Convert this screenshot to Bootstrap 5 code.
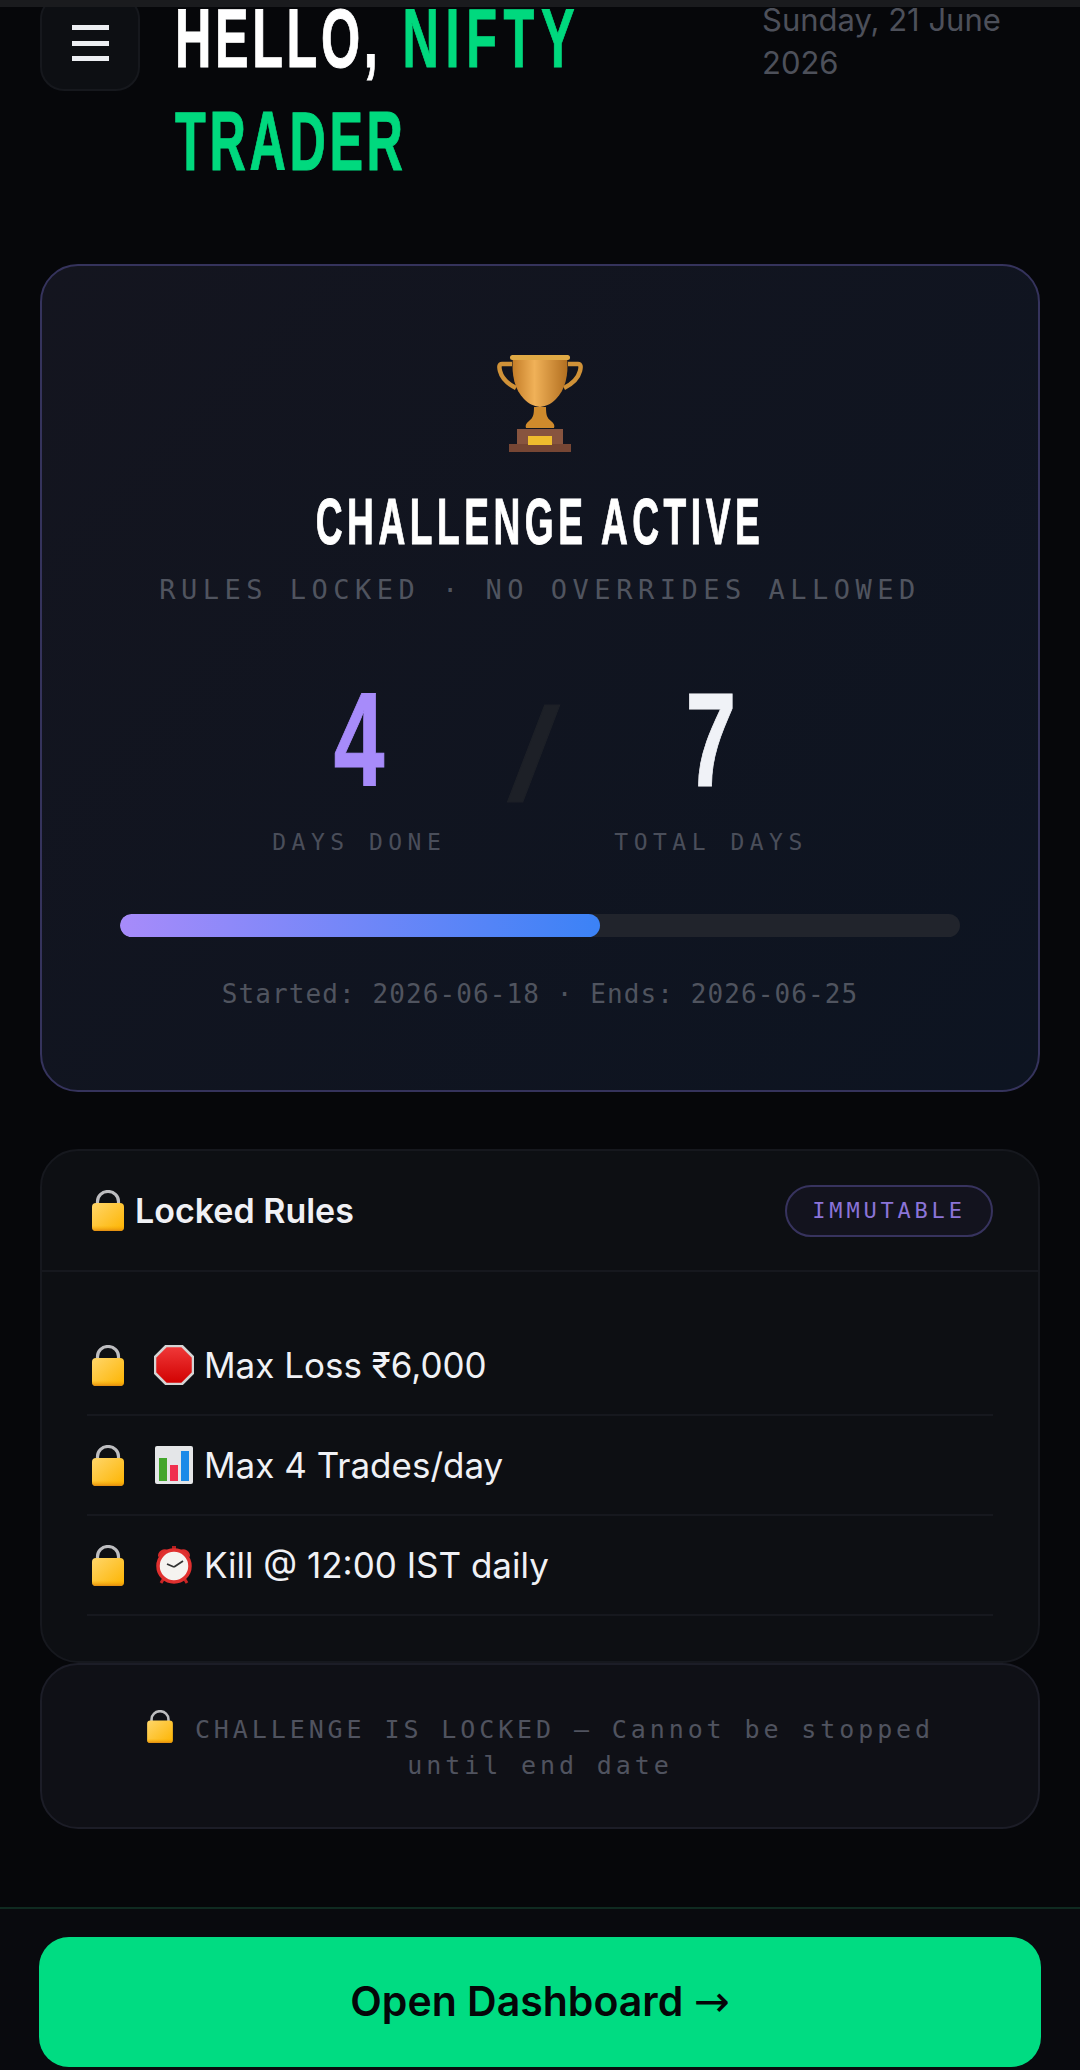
<!doctype html>
<html lang="en">
<head>
<meta charset="utf-8">
<title>Challenge</title>
<link href="https://cdn.jsdelivr.net/npm/bootstrap@5.3.0/dist/css/bootstrap.min.css" rel="stylesheet">
<style>
html,body{background:#06070a;margin:0}
.app-shell{width:1080px;height:2070px;background:#06070a;font-family:Inter,"Noto Sans",sans-serif;color:#f0f1f5}
.top-strip{height:7px;background:#1a1b1e;flex:none;position:relative;z-index:2}
.scroll-pane{flex:1 1 auto;min-height:0;overflow:hidden;padding:0 40px}
.hdr{margin-top:-20px;margin-bottom:71px}
.menu-btn{width:100px;height:96px;margin-top:8px;border:2px solid #16181d;border-radius:24px;background:#0d0f13;flex:none;padding-top:28px}
.menu-btn i{display:block;width:37px;height:5px;background:#eceef2;margin-bottom:10.5px}
.cond{font-family:"Liberation Sans",sans-serif;font-weight:700;-webkit-text-stroke:1px currentColor}
.hello{font-size:84px;line-height:103px;letter-spacing:6px;word-spacing:6px;margin:0 0 0 35px;width:520px;flex:none;white-space:nowrap;transform:scaleX(.6);transform-origin:left top;color:#fff}
.hello b{color:#00d97e;font-weight:700}
.wide-word{letter-spacing:11px}
.date-txt{width:278px;font-size:31px;line-height:43px;color:#4d505a;margin-top:11px;margin-left:auto}
.hero{height:828px;border:2px solid #35335c;border-radius:38px;background:linear-gradient(135deg,#14151f,#0d1421);padding-top:89px;margin-bottom:57px}
.trophy{width:120px;height:120px;margin:-10px auto -10px;display:block}
.hero-title{font-size:64px;line-height:76px;letter-spacing:7.8px;color:#fff;margin-top:29px;transform:scaleX(.58);white-space:nowrap}
.mono{font-family:"DejaVu Sans Mono","Liberation Mono",monospace}
.hero-sub{font-size:27px;line-height:32px;letter-spacing:5.5px;color:#50545f;margin-top:14px}
.count-row{margin-top:74px;height:170px;gap:60px}
.num{font-size:134px;line-height:120px;height:120px;transform:scaleX(.68)}
.n-a{color:#a78bfa}.n-b{color:#f0f2f7}
.count-lab{font-size:23px;line-height:28px;letter-spacing:5.5px;color:#4a4e5a;margin-top:27.5px;white-space:nowrap;-webkit-text-stroke:0}
.slash{width:48px;font-size:130px;line-height:120px;height:120px;color:#1d2027;font-style:italic;margin-top:14px;display:flex;justify-content:center}
.track{height:23px;margin:64px 78px 0;background:#21242c;border-radius:12px;overflow:hidden}
.fill{height:100%;background:linear-gradient(90deg,#a78bfa,#3b82f6);border-radius:12px}
.dates{font-size:26px;line-height:32px;letter-spacing:1.1px;color:#50545f;margin-top:41px}
.rules{height:514px;border:2px solid #16181e;border-radius:38px;background:#0d0f13}
.rules-head{height:121px;border-bottom:2px solid #16181e;padding:0 45px}
.rules-title{font-size:34px;font-weight:600;gap:10px}
.pill{border:2px solid #37335e;border-radius:26px;height:52px;width:208px;background:#13131e;font-size:22px;letter-spacing:3.8px;color:#8b74d8;line-height:48px;text-align:center}
.rule-list{padding:44px 45px 0}
.rule-row{height:100px;border-bottom:2px solid #16181e;font-size:35px}
.ic-lock{width:34px;height:41px;flex:none;margin-left:4px}
.ic-emo{width:40px;height:40px;flex:none;margin:0 10px 0 29px}
.locked-note{height:166px;border:2px solid #1c1d27;border-radius:38px;background:#0f1016;padding:45px 90px 0;font-size:25px;line-height:36px;letter-spacing:3.9px;color:#50535f;text-align:center}
.ic-lock-sm{width:28px;height:33px;vertical-align:-5px;margin-right:2px}
.foot{flex:none;height:163px;border-top:2px solid #0f2a20;background:#090a0e;padding:28px 39px 0}
.cta{height:130px;border-radius:30px;background:#00dc82;color:#050608;font-size:41px;font-weight:600;border:0}
.arrow-ch{font-family:"DejaVu Sans",sans-serif;font-weight:400;font-size:43px;line-height:1}
</style>
</head>
<body>
<svg width="0" height="0" class="d-block" aria-hidden="true">
  <defs>
    <linearGradient id="gold" x1="0" y1="0" x2="1" y2="0"><stop offset="0" stop-color="#c47d28"/><stop offset=".4" stop-color="#f0b158"/><stop offset="1" stop-color="#b26f20"/></linearGradient>
    <linearGradient id="lockg" x1="0" y1="0" x2="1" y2="1"><stop offset="0" stop-color="#ffd66a"/><stop offset="1" stop-color="#fdb400"/></linearGradient>
    <linearGradient id="lockb" x1="0" y1="0" x2="0" y2="1"><stop offset=".8" stop-color="#fdb400" stop-opacity="0"/><stop offset="1" stop-color="#e08a12"/></linearGradient>
    <linearGradient id="redg" x1="0" y1="0" x2="0" y2="1"><stop offset="0" stop-color="#f03a3a"/><stop offset="1" stop-color="#d10000"/></linearGradient>
    <symbol id="lk" viewBox="0 0 34 41">
      <path d="M6.5 16V11.5a10.5 10 0 0 1 21 0V16" fill="none" stroke="#bdbdc0" stroke-width="3.2"/>
      <rect x="1" y="13" width="32" height="28" rx="4" fill="url(#lockg)"/>
      <rect x="1" y="13" width="32" height="28" rx="4" fill="url(#lockb)"/>
    </symbol>
  </defs>
</svg>
<div class="app-shell d-flex flex-column overflow-hidden">
  <div class="top-strip"></div>
  <div class="scroll-pane">
    <div class="hdr d-flex align-items-start">
      <div class="menu-btn d-flex flex-column align-items-center"><i></i><i></i><i></i></div>
      <h1 class="hello cond">HELLO, <b><span class="wide-word">NIFTY</span><br>TRADER</b></h1>
      <div class="date-txt">Sunday, 21 June 2026</div>
    </div>
    <div class="hero text-center">
      <svg class="trophy" viewBox="0 0 120 120" aria-hidden="true">
        <path d="M32 19H22c-3 0 -3 3 -2 7 2 8 8 13 16 17M88 19h10c3 0 3 3 2 7-2 8-8 13-16 17" fill="none" stroke="#d09238" stroke-width="4.5"/>
        <path d="M33 12h54c2 18-2 33-11 42-5 5-9 7-16 8-7-1-11-3-16-8-9-9-13-24-11-42z" fill="url(#gold)"/>
        <rect x="30" y="10" width="60" height="5" rx="2.5" fill="#e0aa45"/>
        <path d="M54 62h12c0 8 1 11 5 14 3 2 4 5 3 7H46c-1-2 0-5 3-7 4-3 5-6 5-14z" fill="#cf8a2c"/>
        <path d="M37 84h46v15H37z" fill="#87543f"/>
        <path d="M29 99h62v8H29z" fill="#764634"/>
        <rect x="48" y="91" width="24" height="9" fill="#eebc2e"/>
      </svg>
      <div class="hero-title cond">CHALLENGE ACTIVE</div>
      <div class="hero-sub mono">RULES LOCKED · NO OVERRIDES ALLOWED</div>
      <div class="count-row d-flex justify-content-center">
        <div><div class="num cond n-a">4</div><div class="count-lab mono">DAYS DONE</div></div>
        <div class="slash cond">/</div>
        <div><div class="num cond n-b">7</div><div class="count-lab mono">TOTAL DAYS</div></div>
      </div>
      <div class="track"><div class="fill" style="width:57.14%"></div></div>
      <div class="dates mono">Started: 2026-06-18 · Ends: 2026-06-25</div>
    </div>
    <div class="rules">
      <div class="rules-head d-flex align-items-center justify-content-between">
        <div class="rules-title d-flex align-items-center"><svg class="ic-lock"><use href="#lk"/></svg><span>Locked Rules</span></div>
        <div class="pill mono">IMMUTABLE</div>
      </div>
      <div class="rule-list">
        <div class="rule-row d-flex align-items-center"><svg class="ic-lock"><use href="#lk"/></svg>
          <svg class="ic-emo" viewBox="0 0 40 40"><path d="M12 1h16l11 11v16L28 39H12L1 28V12z" fill="url(#redg)" stroke="#d4d4d4" stroke-width="2.5" stroke-linejoin="round"/></svg>
          <span>Max Loss ₹6,000</span></div>
        <div class="rule-row d-flex align-items-center"><svg class="ic-lock"><use href="#lk"/></svg>
          <svg class="ic-emo" viewBox="0 0 40 40"><rect x="1" y="1" width="38" height="38" rx="2" fill="#e4e6e8"/><rect x="5" y="13" width="8" height="23" fill="#43a62c"/><rect x="16" y="20" width="8" height="16" fill="#f0304e"/><rect x="27" y="6" width="8" height="30" fill="#1c8ae8"/></svg>
          <span>Max 4 Trades/day</span></div>
        <div class="rule-row d-flex align-items-center"><svg class="ic-lock"><use href="#lk"/></svg>
          <svg class="ic-emo" viewBox="0 0 40 40"><path d="M4 12a7 7 0 0 1 10-7zM36 12a7 7 0 0 0-10-7z" fill="#d92a2a"/><rect x="18" y="1" width="4" height="5" fill="#b52020"/><path d="M10 33l-3 5M30 33l3 5" stroke="#c92424" stroke-width="3"/><circle cx="20" cy="21" r="16" fill="#f5f3f0" stroke="#e0302f" stroke-width="3.5"/><path d="M20 22l-7-3M20 22l9-6" stroke="#333" stroke-width="1.8" fill="none"/></svg>
          <span>Kill @ 12:00 IST daily</span></div>
      </div>
    </div>
    <div class="locked-note mono"><svg class="ic-lock-sm"><use href="#lk"/></svg> CHALLENGE IS LOCKED — Cannot be stopped until end date</div>
  </div>
  <div class="foot"><button class="cta btn w-100">Open Dashboard <span class="arrow-ch">→</span></button></div>
</div>
<script src="https://cdn.jsdelivr.net/npm/bootstrap@5.3.0/dist/js/bootstrap.bundle.min.js"></script>
</body>
</html>
